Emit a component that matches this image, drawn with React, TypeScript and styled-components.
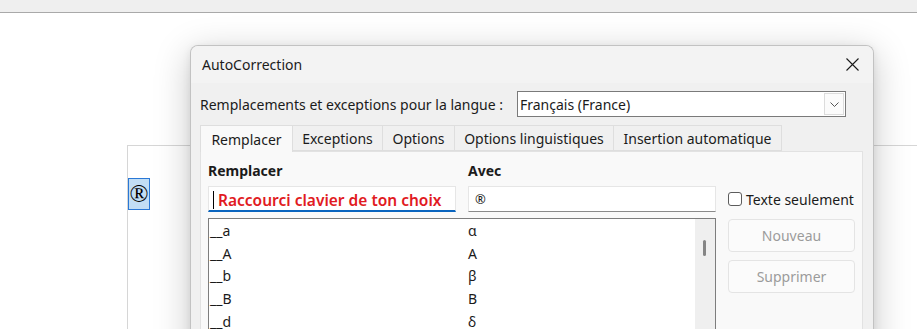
import React from "react";
import styled, { createGlobalStyle } from "styled-components";

const GlobalStyle = createGlobalStyle`
  html, body {
    margin: 0;
    padding: 0;
    background: #ffffff;
    overflow: hidden;
  }
  body {
    font-family: "Noto Sans", "Open Sans", sans-serif;
    color: #1b1b1b;
  }
`;

const Screen = styled.div`
  position: relative;
  width: 917px;
  height: 329px;
  overflow: hidden;
  background: #ffffff;
`;

const TopBar = styled.div`
  height: 12px;
  background: #efefef;
  border-bottom: 1px solid #a9a9a9;
`;

const Workspace = styled.div`
  position: relative;
  display: flow-root;
  height: 316px;
`;

const DocPage = styled.div`
  margin: 132px 0 0 127px;
  height: 200px;
  padding-top: 32px;
  border-top: 1px solid #d6d6d6;
  border-left: 1px solid #d6d6d6;
  box-sizing: border-box;
`;

const Selection = styled.span`
  display: flex;
  align-items: center;
  justify-content: center;
  width: 22px;
  height: 32px;
  box-sizing: border-box;
  border: 1px solid #2a78d6;
  background: #c2def5;
  font-family: "Liberation Serif", "DejaVu Serif", serif;
  font-size: 25px;
  color: #000;
`;

const Dialog = styled.div`
  position: absolute;
  left: 190px;
  top: 32px;
  width: 684px;
  height: 320px;
  box-sizing: border-box;
  border: 1px solid #c2c2c2;
  border-bottom: none;
  border-radius: 8px 8px 0 0;
  background: #f0f0f0;
  box-shadow: 0 8px 36px rgba(0, 0, 0, 0.22), 0 2px 8px rgba(0, 0, 0, 0.08);
  overflow: hidden;
`;

const TitleBar = styled.div`
  display: flex;
  align-items: center;
  justify-content: space-between;
  height: 37px;
  padding: 0 14px 0 11px;
  background: #f3f3f3;
  font-size: 14px;
`;

const CloseIcon = () => (
  <svg width="13" height="13" viewBox="0 0 13 13">
    <path d="M0.5 0.5 L12.5 12.5 M12.5 0.5 L0.5 12.5" stroke="#1a1a1a" strokeWidth="1.1" />
  </svg>
);

const Body = styled.div`
  padding: 8px 10px 0 9px;
`;

const LangRow = styled.div`
  display: flex;
  align-items: center;
  gap: 12px;
  font-size: 14px;
`;

const LangLabel = styled.span`
  flex: 0 0 305px;
  white-space: nowrap;
`;

const Dropdown = styled.div`
  display: flex;
  align-items: center;
  width: 329px;
  height: 26px;
  box-sizing: border-box;
  border: 1px solid #7a7a7a;
  background: #ffffff;
  padding-left: 2px;
`;

const DropdownValue = styled.span`
  flex: 1;
  white-space: nowrap;
`;

const ArrowBox = styled.span`
  display: flex;
  align-items: center;
  justify-content: center;
  width: 20px;
  height: 22px;
  margin-right: 1px;
  box-sizing: border-box;
  border: 1px solid #dcdcdc;
  background: #fbfbfb;
`;

const TabBar = styled.div`
  display: flex;
  margin-top: 8px;
  height: 26px;
  align-items: flex-end;
`;

const Tab = styled.div<{ $selected?: boolean; $w: number }>`
  position: relative;
  display: flex;
  align-items: center;
  justify-content: center;
  width: ${(p) => p.$w}px;
  height: ${(p) => (p.$selected ? 27 : 26)}px;
  margin-bottom: ${(p) => (p.$selected ? -1 : 0)}px;
  margin-right: -1px;
  box-sizing: border-box;
  border: 1px solid #dedede;
  border-bottom: ${(p) => (p.$selected ? "none" : "1px solid #dedede")};
  background: ${(p) => (p.$selected ? "#f9f9f9" : "#f0f0f0")};
  font-size: 14px;
  white-space: nowrap;
  z-index: ${(p) => (p.$selected ? 1 : 0)};
`;

const Panel = styled.div`
  display: grid;
  grid-template-columns: 248px 248px 127px;
  column-gap: 12px;
  align-content: start;
  height: 240px;
  padding: 9px 6px 0 7px;
  border: 1px solid #e2e2e2;
  background: #f9f9f9;
`;

const ColumnHead = styled.div`
  height: 20px;
  line-height: 20px;
  font-size: 14px;
  font-weight: 700;
  margin-bottom: 5px;
`;

const Field = styled.div<{ $focused?: boolean }>`
  display: flex;
  align-items: center;
  height: 26px;
  box-sizing: border-box;
  padding-left: 4px;
  background: #ffffff;
  border: 1px solid #e6e6e6;
  border-bottom: ${(p) => (p.$focused ? "2px solid #0a64be" : "1px solid #8a8a8a")};
  font-size: 13px;
`;

const Caret = styled.span`
  width: 1px;
  height: 18px;
  margin-top: 2px;
  background: #000;
  margin-right: 4px;
`;

const HintText = styled.span`
  color: #e11a22;
  font-size: 15.5px;
  font-weight: 600;
  white-space: nowrap;
  margin-top: 3px;
`;

const CheckRow = styled.label`
  display: flex;
  align-items: center;
  gap: 4px;
  font-size: 14px;
  white-space: nowrap;
`;

const CheckBox = styled.span`
  width: 14px;
  height: 14px;
  box-sizing: border-box;
  border: 1px solid #5c5c5c;
  border-radius: 3px;
  background: #fff;
`;

const List = styled.div`
  grid-column: 1 / 3;
  display: flex;
  margin-top: 6px;
  height: 140px;
  box-sizing: border-box;
  border: 1px solid #7d7d7d;
  background: #ffffff;
`;

const ListRows = styled.div`
  flex: 1;
  padding: 1px 0 0 1px;
`;

const ListRow = styled.div`
  display: grid;
  grid-template-columns: 258px 1fr;
  height: 22.7px;
  line-height: 22px;
  font-size: 14px;
`;

const ScrollTrack = styled.div`
  position: relative;
  width: 20px;
  background: #efefef;
`;

const ScrollThumb = styled.div`
  position: absolute;
  left: 8px;
  top: 21px;
  width: 3px;
  height: 16px;
  border-radius: 2px;
  background: #858585;
`;

const ButtonColumn = styled.div`
  display: flex;
  flex-direction: column;
  gap: 8px;
  margin-top: 7px;
`;

const DisabledButton = styled.button`
  height: 33px;
  box-sizing: border-box;
  border: 1px solid #e4e4e4;
  border-radius: 4px;
  background: #fbfbfb;
  color: #9b9b9b;
  font-family: inherit;
  font-size: 14px;
  padding: 0;
`;

const tabs = [
  { label: "Remplacer", w: 93 },
  { label: "Exceptions", w: 91 },
  { label: "Options", w: 73 },
  { label: "Options linguistiques", w: 160 },
  { label: "Insertion automatique", w: 169 },
];

const entries: [string, string][] = [
  ["__a", "α"],
  ["__A", "Α"],
  ["__b", "β"],
  ["__B", "Β"],
  ["__d", "δ"],
];

export default function App() {
  return (
    <Screen>
      <GlobalStyle />
      <TopBar />
      <Workspace>
        <DocPage>
          <Selection>®</Selection>
        </DocPage>
        <Dialog>
          <TitleBar>
            <span>AutoCorrection</span>
            <CloseIcon />
          </TitleBar>
          <Body>
            <LangRow>
              <LangLabel>Remplacements et exceptions pour la langue :</LangLabel>
              <Dropdown>
                <DropdownValue>Français (France)</DropdownValue>
                <ArrowBox>
                  <svg width="9" height="5" viewBox="0 0 9 5">
                    <path d="M0.5 0.5 L4.5 4.5 L8.5 0.5" fill="none" stroke="#555" strokeWidth="1" />
                  </svg>
                </ArrowBox>
              </Dropdown>
            </LangRow>
            <TabBar>
              {tabs.map((t, i) => (
                <Tab key={t.label} $w={t.w} $selected={i === 0}>
                  {t.label}
                </Tab>
              ))}
            </TabBar>
            <Panel>
              <ColumnHead>Remplacer</ColumnHead>
              <ColumnHead>Avec</ColumnHead>
              <div />
              <Field $focused>
                <Caret />
                <HintText>Raccourci clavier de ton choix</HintText>
              </Field>
              <Field style={{ paddingLeft: 6 }}>®</Field>
              <CheckRow>
                <CheckBox />
                Texte seulement
              </CheckRow>
              <List>
                <ListRows>
                  {entries.map(([a, b]) => (
                    <ListRow key={a}>
                      <span>{a}</span>
                      <span>{b}</span>
                    </ListRow>
                  ))}
                </ListRows>
                <ScrollTrack>
                  <ScrollThumb />
                </ScrollTrack>
              </List>
              <ButtonColumn>
                <DisabledButton disabled>Nouveau</DisabledButton>
                <DisabledButton disabled>Supprimer</DisabledButton>
              </ButtonColumn>
            </Panel>
          </Body>
        </Dialog>
      </Workspace>
    </Screen>
  );
}
